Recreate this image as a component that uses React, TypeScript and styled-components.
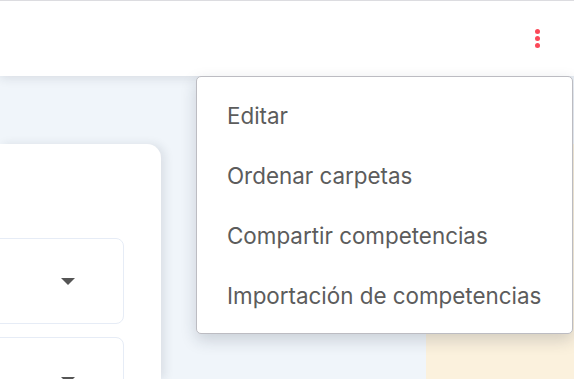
import React from 'react';
import styled, { createGlobalStyle } from 'styled-components';

const GlobalStyle = createGlobalStyle`
  html, body {
    margin: 0;
    padding: 0;
    height: 100%;
    overflow: hidden;
    background: #f0f5fa;
    font-family: Inter, "Noto Sans", sans-serif;
  }
`;

const menuItems = [
  'Editar',
  'Ordenar carpetas',
  'Compartir competencias',
  'Importación de competencias',
];

const App = () => {
  return (
    <Page>
      <GlobalStyle />
      <Header>
        <MoreButton aria-label="Más opciones">
          <Dot />
          <Dot />
          <Dot />
        </MoreButton>
        <Menu>
          {menuItems.map((item) => (
            <MenuItem key={item}>{item}</MenuItem>
          ))}
        </Menu>
      </Header>
      <Main>
        <Card>
          <SelectBox>
            <Caret />
          </SelectBox>
          <SelectBox>
            <Caret />
          </SelectBox>
        </Card>
        <Spacer />
        <SidePanel />
      </Main>
    </Page>
  );
};

const Page = styled.div`
  height: 379px;
  display: flex;
  flex-direction: column;
  overflow: hidden;
`;

const Header = styled.header`
  position: relative;
  z-index: 2;
  height: 75px;
  flex-shrink: 0;
  background: #ffffff;
  border-top: 1px solid #dcdce0;
  box-shadow: 0 2px 10px rgba(30, 40, 60, 0.12);
  display: flex;
  justify-content: flex-end;
  align-items: flex-start;
  padding-right: 33px;
`;

const MoreButton = styled.button`
  margin-top: 28px;
  width: 8px;
  padding: 0;
  border: none;
  background: none;
  display: flex;
  flex-direction: column;
  align-items: center;
  gap: 2px;
  cursor: pointer;
`;

const Dot = styled.span`
  width: 5px;
  height: 5px;
  border-radius: 50%;
  background: #fb4858;
`;

const Menu = styled.ul`
  position: absolute;
  top: 75px;
  left: 196px;
  width: 375px;
  margin: 0;
  padding: 8px 0;
  list-style: none;
  background: #ffffff;
  border: 1px solid #bcbcc2;
  border-radius: 5px;
  box-shadow: 0 6px 16px rgba(30, 40, 60, 0.18);
`;

const MenuItem = styled.li`
  height: 60px;
  display: flex;
  align-items: center;
  padding-left: 30px;
  font-size: 22.4px;
  color: #5c5c5c;
  cursor: pointer;
`;

const Main = styled.main`
  flex: 1;
  display: flex;
  align-items: stretch;
  padding-top: 68px;
  min-height: 0;
`;

const Card = styled.section`
  width: 161px;
  flex-shrink: 0;
  background: #ffffff;
  border-radius: 0 14px 0 0;
  box-shadow: 4px 0 10px rgba(30, 40, 60, 0.1);
  padding-top: 94px;
  display: flex;
  flex-direction: column;
  gap: 13px;
  overflow: hidden;
`;

const SelectBox = styled.div`
  width: 150px;
  height: 86px;
  margin-left: -26px;
  flex-shrink: 0;
  box-sizing: border-box;
  border: 1px solid #e6ecf6;
  border-radius: 8px;
  display: flex;
  align-items: center;
  justify-content: flex-end;
  padding-right: 48px;
`;

const Caret = styled.span`
  width: 0;
  height: 0;
  border-left: 7px solid transparent;
  border-right: 7px solid transparent;
  border-top: 7px solid #555555;
`;

const Spacer = styled.div`
  width: 265px;
  flex-shrink: 0;
`;

const SidePanel = styled.aside`
  flex: 1;
  background: #fbf1dd;
`;

export default App;
